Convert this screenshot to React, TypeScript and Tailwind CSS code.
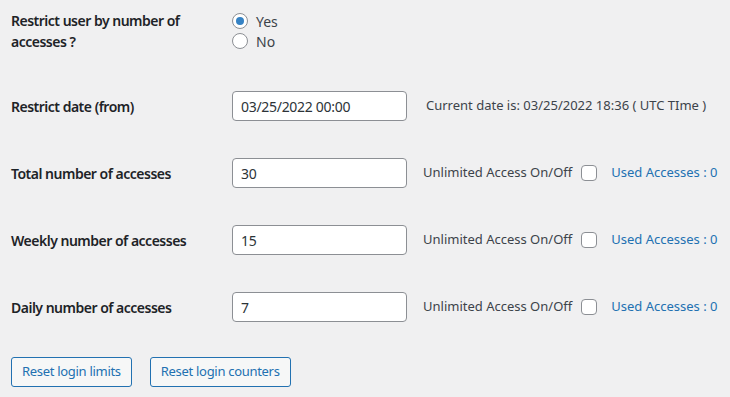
const font = { fontFamily: '"Noto Sans", "Open Sans", sans-serif' };

interface LimitRow {
  label: string;
  value: string;
  used: number;
}

const limits: LimitRow[] = [
  { label: "Total number of accesses", value: "30", used: 0 },
  { label: "Weekly number of accesses", value: "15", used: 0 },
  { label: "Daily number of accesses", value: "7", used: 0 },
];

function Radio({ checked, label }: { checked?: boolean; label: string }) {
  return (
    <label className="flex h-5 items-center gap-2 text-[14px] text-[#3c434a]">
      <span className="flex h-4 w-4 items-center justify-center rounded-full border border-[#8c8f94] bg-white">
        {checked && <span className="h-2 w-2 rounded-full bg-[#3582c4]" />}
      </span>
      {label}
    </label>
  );
}

function TextBox({ value }: { value: string }) {
  return (
    <input
      readOnly
      value={value}
      className="h-[30px] w-[175px] rounded-[4px] border border-[#8c8f94] bg-white px-2 text-[14px] tracking-[-0.3px] text-[#2c3338] outline-none"
      style={font}
    />
  );
}

export default function App() {
  return (
    <div className="min-h-[397px] bg-[#f0f0f1] pl-[11px] pt-[10px]" style={font}>
      {/* Restrict user */}
      <div className="flex">
        <div className="w-[221px] text-[14px] font-semibold leading-[21px] tracking-[-0.5px] text-[#1d2327]">
          Restrict user by number of
          <br />
          accesses ?
        </div>
        <div className="flex flex-col pt-[1px]">
          <Radio checked label="Yes" />
          <Radio label="No" />
        </div>
      </div>

      {/* Restrict date */}
      <div className="mt-[39px] flex h-[30px] items-center">
        <div className="w-[221px] text-[14px] font-semibold tracking-[-0.5px] text-[#1d2327]">Restrict date (from)</div>
        <TextBox value="03/25/2022 00:00" />
        <span className="ml-[19px] text-[13px] text-[#3c434a]">
          Current date is: 03/25/2022 18:36 ( UTC TIme )
        </span>
      </div>

      {limits.map((r) => (
        <div key={r.label} className="mt-[37px] flex h-[30px] items-center">
          <div className="w-[221px] text-[14px] font-semibold tracking-[-0.5px] text-[#1d2327]">{r.label}</div>
          <TextBox value={r.value} />
          <span className="ml-[16px] text-[13px] text-[#3c434a]">Unlimited Access On/Off</span>
          <span className="ml-[9px] h-4 w-4 rounded-[4px] border border-[#8c8f94] bg-white" />
          <a className="ml-[14px] text-[13px] text-[#2271b1]">Used Accesses : {r.used}</a>
        </div>
      ))}

      <div className="mt-[35px] flex gap-[18px]">
        <button className="h-[30px] rounded-[3px] border border-[#2271b1] bg-[#f6f7f7] px-[10px] text-[13px] tracking-[-0.3px] text-[#2271b1]">
          Reset login limits
        </button>
        <button className="h-[30px] rounded-[3px] border border-[#2271b1] bg-[#f6f7f7] px-[10px] text-[13px] tracking-[-0.3px] text-[#2271b1]">
          Reset login counters
        </button>
      </div>
    </div>
  );
}
